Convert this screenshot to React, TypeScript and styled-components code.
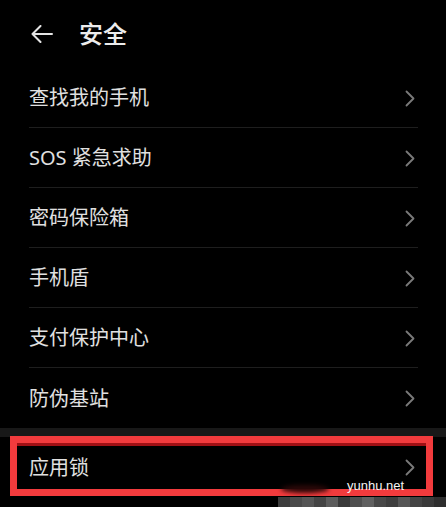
import styled, { createGlobalStyle } from 'styled-components'

const GlobalStyle = createGlobalStyle`
  html, body {
    margin: 0;
    padding: 0;
    background: #000000;
  }
  * {
    box-sizing: border-box;
  }
`

const items = ['查找我的手机', 'SOS 紧急求助', '密码保险箱', '手机盾', '支付保护中心', '防伪基站']

const mosaic = ['#3c3c3c', '#4a4a4a', '#555555', '#444444', '#5c5c5c', '#3a3a3a', '#4f4f4f', '#606060', '#484848', '#3e3e3e', '#565656', '#444444', '#3a3a3a', '#2e2e2e']

function BackArrow() {
  return (
    <svg width="22" height="18" viewBox="0 0 22 18" fill="none">
      <path d="M21 9H1.5M9.5 1L1.5 9L9.5 17" stroke="#e4e4e4" strokeWidth="2" strokeLinecap="round" strokeLinejoin="round" />
    </svg>
  )
}

function Chevron() {
  return (
    <svg width="10" height="17" viewBox="0 0 10 17" fill="none">
      <path d="M1.5 1.5L8.5 8.5L1.5 15.5" stroke="#7a7a7a" strokeWidth="1.8" strokeLinecap="round" strokeLinejoin="round" />
    </svg>
  )
}

export default function App() {
  return (
    <>
      <GlobalStyle />
      <Page>
        <Header>
          <BackArrow />
          <Title>安全</Title>
        </Header>
        <List>
          {items.map((label) => (
            <Row key={label}>
              <Label>{label}</Label>
              <Chevron />
            </Row>
          ))}
        </List>
        <GroupGap />
        <LockRow>
          <Label>应用锁</Label>
          <Chevron />
          <Frame />
          <Smudge />
          <Watermark>yunhu.net</Watermark>
        </LockRow>
        <Mosaic>
          {mosaic.map((c, i) => (
            <Cell key={i} $color={c} />
          ))}
        </Mosaic>
      </Page>
    </>
  )
}

const Page = styled.div`
  width: 446px;
  height: 507px;
  overflow: hidden;
  background: #000000;
  display: flex;
  flex-direction: column;
  font-family: 'Noto Sans', 'Noto Sans CJK SC', sans-serif;
  color: #e2e2e2;
`

const Header = styled.div`
  height: 68px;
  display: flex;
  align-items: center;
  padding-left: 31px;
  gap: 26px;
`

const Title = styled.h1`
  margin: 0;
  font-size: 24px;
  font-weight: 500;
  line-height: 1;
  color: #ececec;
  padding-bottom: 1px;
`

const List = styled.div`
  display: flex;
  flex-direction: column;
`

const Row = styled.div`
  height: 60px;
  margin: 0 28px 0 29px;
  padding-right: 3px;
  padding-top: 1px;
  display: flex;
  align-items: center;
  justify-content: space-between;
  border-bottom: 1px solid #1e1e1e;

  &:last-child {
    border-bottom: none;
  }
`

const Label = styled.span`
  font-size: 20px;
  line-height: 1;
  color: #e0e0e0;
`

const GroupGap = styled.div`
  height: 9px;
  background: #181818;
`

const LockRow = styled(Row)`
  position: relative;
  border-bottom: none;
`

const Frame = styled.div`
  position: absolute;
  left: -19px;
  top: -1px;
  width: 423px;
  height: 60px;
  border: 7px solid #f23b3d;
  box-shadow: inset 0 3px 0 #a01014;
  pointer-events: none;
`

const Smudge = styled.div`
  position: absolute;
  left: 252px;
  top: 48px;
  width: 48px;
  height: 8px;
  border-radius: 50%;
  background: #2a0808;
  filter: blur(2px);
`

const Watermark = styled.span`
  position: absolute;
  left: 318px;
  top: 42px;
  font-family: 'Liberation Sans', sans-serif;
  font-size: 13px;
  line-height: 1;
  color: #f4f4f4;
`

const Mosaic = styled.div`
  height: 10px;
  display: flex;
  justify-content: flex-end;
`

const Cell = styled.div<{ $color: string }>`
  width: 12px;
  height: 10px;
  background: ${(p) => p.$color};
`
